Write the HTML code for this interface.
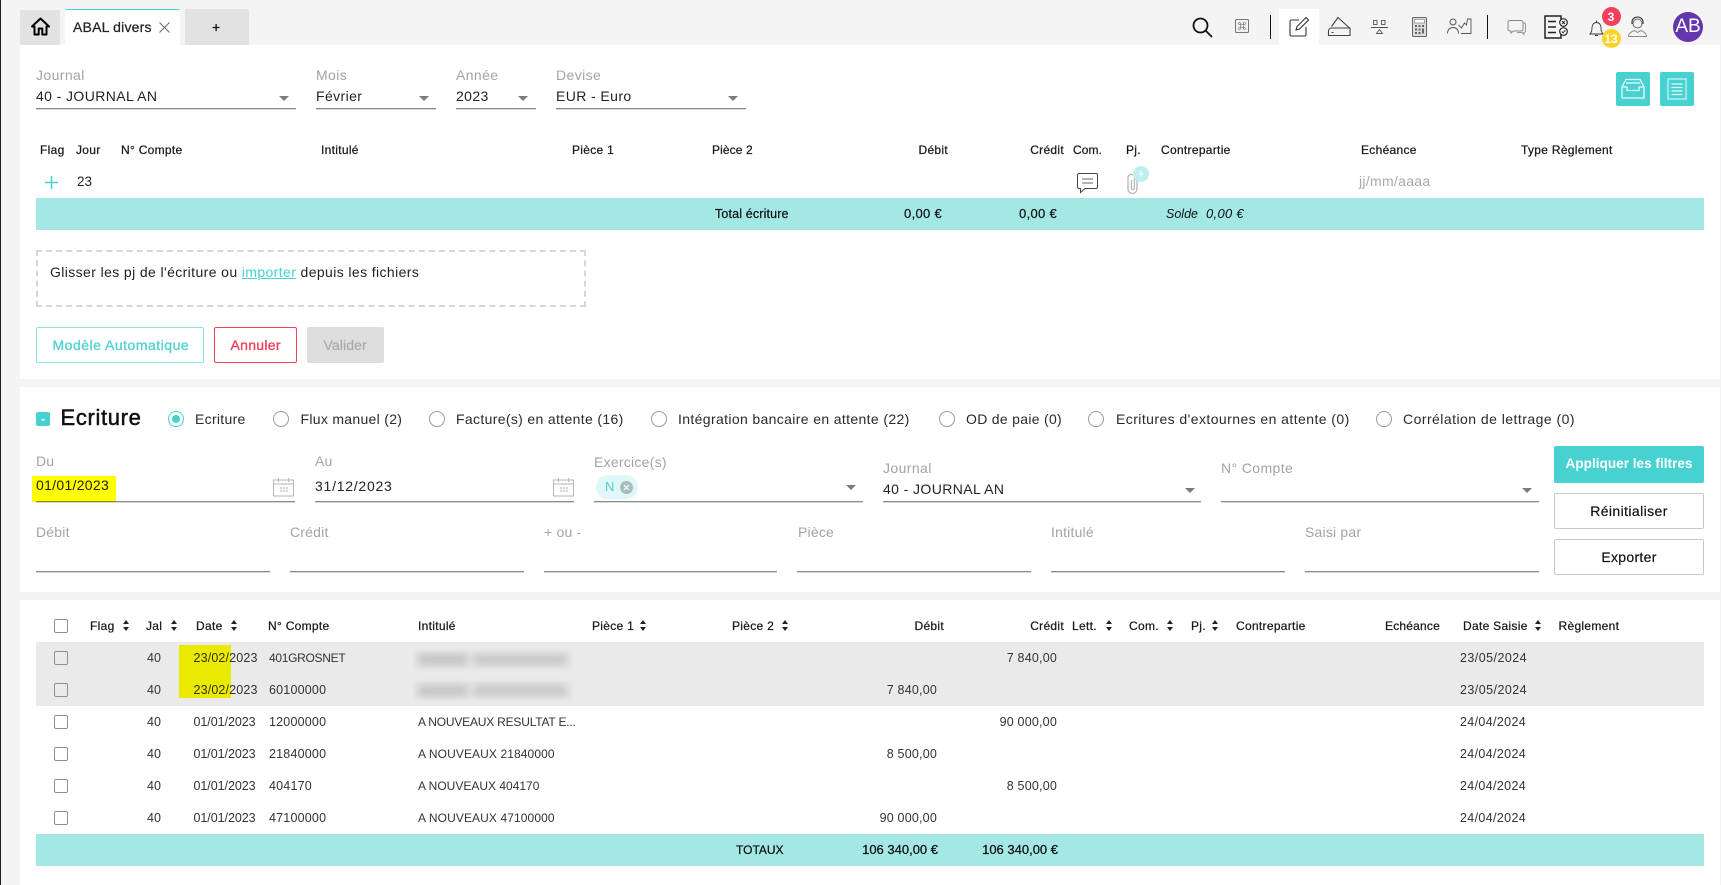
<!DOCTYPE html>
<html lang="fr"><head><meta charset="utf-8"><title>ABAL divers</title>
<style>
html,body{margin:0;padding:0;width:1721px;height:885px;overflow:hidden;background:#f4f4f4}
body{position:relative;font-family:"Liberation Sans",Arial,sans-serif;color:#222;border:0}
.b{position:absolute;display:block}
.t{position:absolute;white-space:nowrap;line-height:16px;display:block}
.f{font-size:14px;letter-spacing:.4px;color:#222}
.l{font-size:14px;letter-spacing:.4px;color:#a3a3a3}
.h{font-size:12px;letter-spacing:.3px;color:#1a1a1a;-webkit-text-stroke:.25px #1a1a1a}
.r{font-size:14px;letter-spacing:.3px;color:#2a2a2a}
.c{font-size:12.5px;color:#333}
.u{position:absolute;height:1px;background:#8c8c8c;border-bottom:1px solid #d8d8d8;box-sizing:content-box}
.a{position:absolute;width:0;height:0;border-left:5px solid transparent;border-right:5px solid transparent;border-top:5px solid #7b7b7b}
.s{position:absolute;width:6px;height:11px;top:620px}
.s:before,.s:after{content:"";position:absolute;left:0;width:0;height:0;border-left:3px solid transparent;border-right:3px solid transparent}
.s:before{top:0;border-bottom:4px solid #222}
.s:after{bottom:0;border-top:4px solid #222}
.cb{position:absolute;left:54px;width:12px;height:12px;border:1px solid #8f8f8f;border-radius:2px;background:transparent}
.rd{position:absolute;top:411px;width:14px;height:14px;border:1.5px solid #9a9a9a;border-radius:50%;background:#fff}
.btn{position:absolute;box-sizing:border-box;border-radius:2px;text-align:center}
.y{position:absolute;background:#ff0;mix-blend-mode:multiply}
svg{position:absolute;overflow:visible}
</style></head><body>
<span class="b" style="left:0;top:0;width:1px;height:885px;background:#222"></span>

<!-- Tabs -->
<span class="b" style="left:20px;top:10px;width:40px;height:35px;background:#e2e2e2;border-radius:2px 2px 0 0"></span>
<svg style="left:31px;top:17px" width="19" height="19" viewBox="0 0 19 19"><path d="M9.5 1.5 1 9.5h2.5V17.5h4.2v-6h3.6v6h4.2V9.5H18z" fill="none" stroke="#000" stroke-width="2" stroke-linejoin="round"/></svg>
<span class="b" style="left:65px;top:9px;width:115px;height:36px;background:#fff;border-top:1px solid #47d1d1;box-sizing:border-box;border-radius:2px 2px 0 0"></span>
<span class="t" style="left:73px;top:19px;font-size:14px;letter-spacing:.2px;color:#222;-webkit-text-stroke:.25px #222">ABAL divers</span>
<svg style="left:159px;top:22px" width="11" height="11" viewBox="0 0 11 11"><path d="M.5.5l10 10M10.500.5l-10 10" stroke="#666" stroke-width=".9" fill="none"/></svg>
<span class="b" style="left:185px;top:9px;width:64px;height:36px;background:#e2e2e2;border-radius:2px 2px 0 0"></span>
<span class="t" style="left:212px;top:19px;font-size:14px;color:#111;-webkit-text-stroke:.3px #111">+</span>

<!-- Toolbar icons -->
<svg style="left:1192px;top:17px" width="21" height="21" viewBox="0 0 21 21"><circle cx="8.500" cy="8.500" r="7" fill="none" stroke="#111" stroke-width="1.800"/><path d="M13.500 13.500 20 20" stroke="#111" stroke-width="1.800"/></svg>
<svg style="left:1235px;top:19px" width="14" height="14" viewBox="0 0 14 14"><rect x=".5" y=".5" width="13" height="13" rx="1" fill="#f0f0f0" stroke="#777"/><path d="M5.500 5.500h3v3h-3zM5.500 5.500H4.200a1 1 0 1 1 1.300-1.300zM8.500 5.500V4.200a1 1 0 1 1 1.300 1.300zM8.500 8.500h1.300a1 1 0 1 1-1.300 1.300zM5.500 8.500v1.300a1 1 0 1 1-1.300-1.300z" fill="none" stroke="#666" stroke-width=".6"/></svg>
<span class="b" style="left:1270px;top:15px;width:1px;height:24px;background:#111"></span>
<span class="b" style="left:1279px;top:9px;width:40px;height:36px;background:#fff"></span>
<svg style="left:1289px;top:16px" width="21" height="21" viewBox="0 0 21 21"><path d="M10 4H2.500a1.500 1.500 0 0 0-1.500 1.500v13A1.500 1.500 0 0 0 2.500 20h13a1.500 1.500 0 0 0 1.500-1.500V11" fill="none" stroke="#333" stroke-width="1.100"/><path d="M7 14l1-3.500L17 1.500l2.500 2.500-9 9z" fill="none" stroke="#333" stroke-width="1.100"/></svg>
<svg style="left:1328px;top:17px" width="23" height="20" viewBox="0 0 23 20"><path d="M.5 18.500V14a3 3 0 0 1 3-3H22v7.500zM3.500 9.500 10 .5 21.500 11" fill="none" stroke="#444" stroke-width="1.100"/><path d="M3.500 15.500h2" stroke="#444" stroke-width="1"/></svg>
<svg style="left:1371px;top:20px" width="17" height="14" viewBox="0 0 17 14"><path d="M0 7.500h17" stroke="#555"/><rect x="2.500" y=".5" width="3.500" height="4" fill="none" stroke="#555" stroke-width=".9"/><rect x="10.500" y=".5" width="3.500" height="4" fill="none" stroke="#555" stroke-width=".9"/><path d="M8.500 9.500l3 4h-6z" fill="none" stroke="#555" stroke-width=".9"/></svg>
<svg style="left:1412px;top:17px" width="15" height="20" viewBox="0 0 15 20"><rect x=".5" y=".5" width="14" height="19" rx="1" fill="#ddd" stroke="#666"/><rect x="2.500" y="2.500" width="10" height="3.500" fill="#fff" stroke="#777" stroke-width=".6"/><path d="M3 8h2v2H3zM6.500 8h2v2h-2zM10 8h2v2h-2zM3 11.500h2v2H3zM6.500 11.500h2v2h-2zM10 11.500h2v5h-2zM3 15h2v2H3zM6.500 15h2v2h-2z" fill="#666"/></svg>
<svg style="left:1447px;top:18px" width="25" height="16" viewBox="0 0 25 16"><circle cx="6" cy="4" r="3" fill="none" stroke="#555"/><path d="M.5 15.500c0-4 2.500-6 5.500-6s5.500 2 5.500 6" fill="none" stroke="#555"/><path d="M11.500 7l3 3 3-5 2 2 1-6h3.500v14.500H14" fill="none" stroke="#555" stroke-width=".9"/></svg>
<span class="b" style="left:1487px;top:15px;width:1px;height:24px;background:#111"></span>
<svg style="left:1507px;top:20px" width="19" height="15" viewBox="0 0 19 15"><path d="M3 .5h11a2 2 0 0 1 2 2V9a2 2 0 0 1-2 2H6.500L4 13v-2H3A2 2 0 0 1 1 9V2.500a2 2 0 0 1 2-2z" fill="none" stroke="#888"/><path d="M16.500 3h.5a1.500 1.500 0 0 1 1.500 1.500V11a1.500 1.500 0 0 1-1.500 1.500V14.500l-2-2H10" fill="none" stroke="#89a"/></svg>
<svg style="left:1544px;top:15px" width="25" height="24" viewBox="0 0 25 24"><path d="M17 4.500V1H1v22h16v-4" fill="none" stroke="#222" stroke-width="1.500"/><path d="M4 6.500h8M4 12h8M4 17.500h8" stroke="#222" stroke-width="1.400"/><circle cx="19.500" cy="7.500" r="3.800" fill="#fff" stroke="#222" stroke-width="1.200"/><circle cx="19.500" cy="16.500" r="3.800" fill="#fff" stroke="#222" stroke-width="1.200"/><path d="M18 6l3 3M21 6l-3 3M17.800 16.500l1.300 1.300 2.300-2.600" stroke="#222" fill="none"/></svg>
<svg style="left:1589px;top:20px" width="15" height="17" viewBox="0 0 15 17"><path d="M1 14c1.500-1.500 2-3 2-6s1.500-5.500 4.500-5.500S12 5 12 8s.5 4.500 2 6zM7.500 2.500V.5M6 15.500h3" fill="none" stroke="#333" stroke-width=".9"/></svg>
<span class="b" style="left:1601.500px;top:7px;width:19px;height:19px;background:#f2415f;border-radius:50%"></span>
<span class="t" style="left:1601px;top:8.500px;width:20px;text-align:center;color:#fff;font-size:12px;font-weight:bold">3</span>
<svg style="left:1628px;top:17px" width="19" height="20" viewBox="0 0 19 20"><circle cx="9.500" cy="6.500" r="4.500" fill="none" stroke="#666"/><path d="M4 7V5a5.500 5 0 0 1 11 0v2" fill="none" stroke="#333" stroke-width="1.100"/><path d="M.5 19.500c0-3.500 3-5 6-6l3 2 3-2c3 1 6 2.500 6 6z" fill="none" stroke="#888"/></svg>
<span class="b" style="left:1673px;top:12px;width:30px;height:30px;background:#6435ab;border-radius:50%"></span>
<span class="t" style="left:1673px;top:19px;width:30px;text-align:center;color:#fff;font-size:19px;letter-spacing:0">AB</span>

<!-- Panel 1 -->
<span class="b" style="left:20px;top:45px;width:1700px;height:334px;background:#fff"></span>
<span class="b" style="left:1601.500px;top:29px;width:19px;height:19px;background:#fbd42b;border-radius:50%"></span>
<span class="t" style="left:1601px;top:30.500px;width:20px;text-align:center;color:#fff;font-size:12px;font-weight:bold">13</span>
<span class="t l" style="left:36px;top:67px">Journal</span>
<span class="t f" style="left:36px;top:88px">40 - JOURNAL AN</span>
<span class="a" style="left:279px;top:96px"></span>
<span class="u" style="left:36px;top:108px;width:260px"></span>
<span class="t l" style="left:316px;top:67px">Mois</span>
<span class="t f" style="left:316px;top:88px">Février</span>
<span class="a" style="left:419px;top:96px"></span>
<span class="u" style="left:316px;top:108px;width:120px"></span>
<span class="t l" style="left:456px;top:67px">Année</span>
<span class="t f" style="left:456px;top:88px">2023</span>
<span class="a" style="left:518px;top:96px"></span>
<span class="u" style="left:456px;top:108px;width:80px"></span>
<span class="t l" style="left:556px;top:67px">Devise</span>
<span class="t f" style="left:556px;top:88px">EUR - Euro</span>
<span class="a" style="left:728px;top:96px"></span>
<span class="u" style="left:556px;top:108px;width:190px"></span>

<span class="b" style="left:1616px;top:72px;width:34px;height:34px;background:#47d1d1;border-radius:2px"></span>
<svg style="left:1621px;top:78px" width="24" height="22" viewBox="0 0 24 22"><path d="M1 9 5 1.500h14L23 9v11H1zM1 9h5v3.500h12V9h5M5 5h14" fill="none" stroke="#fff" stroke-width="1.300" stroke-opacity=".9"/></svg>
<span class="b" style="left:1660px;top:72px;width:34px;height:34px;background:#47d1d1;border-radius:2px"></span>
<svg style="left:1667px;top:78px" width="20" height="22" viewBox="0 0 20 22"><rect x="1" y="1" width="18" height="20" fill="none" stroke="#c5f1f1" stroke-width="1.300"/><path d="M4.500 6h11M4.500 9.500h11M4.500 13h11M4.500 16.500h11" stroke="#e6fafa" stroke-width="1.200"/></svg>

<span class="t h" style="left:40px;top:142px">Flag</span>
<span class="t h" style="left:76px;top:142px">Jour</span>
<span class="t h" style="left:121px;top:142px">N° Compte</span>
<span class="t h" style="left:321px;top:142px">Intitulé</span>
<span class="t h" style="left:572px;top:142px">Pièce 1</span>
<span class="t h" style="left:712px;top:142px;letter-spacing:.1px">Pièce 2</span>
<span class="t h" style="right:773px;top:142px">Débit</span>
<span class="t h" style="right:657px;top:142px">Crédit</span>
<span class="t h" style="left:1073px;top:142px;letter-spacing:.1px">Com.</span>
<span class="t h" style="left:1126px;top:142px">Pj.</span>
<span class="t h" style="left:1161px;top:142px">Contrepartie</span>
<span class="t h" style="left:1361px;top:142px">Echéance</span>
<span class="t h" style="left:1521px;top:142px">Type Règlement</span>

<svg style="left:44px;top:175px" width="15" height="15" viewBox="0 0 15 15"><path d="M7.500 1v13M1 7.500h13" stroke="#47d1d1" stroke-width="1.500"/></svg>
<span class="t" style="left:77px;top:174px;font-size:13.500px;color:#222">23</span>
<svg style="left:1077px;top:173px" width="21" height="20" viewBox="0 0 21 20"><path d="M2 .5h17A1.500 1.500 0 0 1 20.500 2v12a1.500 1.500 0 0 1-1.500 1.500H8L3.500 19.500v-4H2A1.500 1.500 0 0 1 .5 14V2A1.500 1.500 0 0 1 2 .5z" fill="#fff" stroke="#444"/><path d="M5 6h11M5 10h11" stroke="#666" stroke-width="1.100"/></svg>
<svg style="left:1127px;top:173px" width="11" height="21" viewBox="0 0 11 21"><path d="M10 6v10a4.500 4.500 0 0 1-9 0V4.500a3.200 3.200 0 0 1 6.400 0V15a1.500 1.500 0 0 1-3 0V7" fill="none" stroke="#b5b5b5" stroke-width="1.300"/></svg>
<span class="b" style="left:1133px;top:166px;width:16px;height:16px;border-radius:50%;background:#bdeef0"></span>
<span class="t" style="left:1133px;top:166px;width:16px;text-align:center;color:#fff;font-size:13px">+</span>
<span class="t" style="left:1359px;top:173px;font-size:14px;letter-spacing:.3px;color:#a8a8a8">jj/mm/aaaa</span>

<span class="b" style="left:36px;top:198px;width:1668px;height:32px;background:#a4e8e6"></span>
<span class="t" style="left:715px;top:206px;font-size:12.500px;letter-spacing:.15px;color:#111;-webkit-text-stroke:.2px #111">Total écriture</span>
<span class="t" style="right:779px;top:206px;font-size:13px;letter-spacing:.3px;color:#111;-webkit-text-stroke:.2px #111">0,00 €</span>
<span class="t" style="right:664px;top:206px;font-size:13px;letter-spacing:.3px;color:#111;-webkit-text-stroke:.2px #111">0,00 €</span>
<span class="t" style="left:1166px;top:206px;font-size:12.500px;font-style:italic;color:#111">Solde</span>
<span class="t" style="left:1206px;top:206px;font-size:13px;letter-spacing:.3px;font-style:italic;color:#111">0,00 €</span>

<span class="b" style="left:36px;top:250px;width:550px;height:57px;box-sizing:border-box;border:2px dashed #d6d6d6"></span>
<span class="t" style="left:50px;top:264px;font-size:14px;letter-spacing:.39px;color:#222">Glisser les pj de l'écriture ou <span style="color:#47d1d1;text-decoration:underline">importer</span> depuis les fichiers</span>

<span class="btn" style="left:36px;top:327px;width:168px;height:36px;border:1px solid #8fe3e3;background:#fff"></span>
<span class="t" style="left:52.500px;top:337px;font-size:14px;letter-spacing:.5px;color:#55d2d4;-webkit-text-stroke:.35px #55d2d4">Modèle Automatique</span>
<span class="btn" style="left:214px;top:327px;width:83px;height:36px;border:1px solid #f2415f;background:#fff"></span>
<span class="t" style="left:230.500px;top:337px;font-size:14px;letter-spacing:.3px;color:#f2415f;-webkit-text-stroke:.35px #f2415f">Annuler</span>
<span class="btn" style="left:307px;top:327px;width:77px;height:36px;background:#dedede"></span>
<span class="t" style="left:323.500px;top:337px;font-size:14px;letter-spacing:.1px;color:#a9a9a9;-webkit-text-stroke:.2px #a9a9a9">Valider</span>

<!-- Panel 2 -->
<span class="b" style="left:20px;top:387px;width:1700px;height:205px;background:#fff"></span>
<span class="b" style="left:36px;top:412px;width:14px;height:14px;background:#47d1d1;border-radius:2px"></span>
<span class="t" style="left:36px;top:411px;width:14px;text-align:center;color:#fff;font-size:12px;font-weight:bold">-</span>
<span class="t" style="left:60.500px;top:406px;font-size:22px;line-height:24px;letter-spacing:.65px;color:#111;-webkit-text-stroke:.5px #111">Ecriture</span>
<span class="rd" style="left:167.500px;border-color:#47d1d1"></span>
<span class="b" style="left:172px;top:415px;width:8px;height:8px;border-radius:50%;background:#47d1d1"></span>
<span class="t r" style="left:195px;top:411px">Ecriture</span>
<span class="rd" style="left:272.500px"></span>
<span class="t r" style="left:300.500px;top:411px">Flux manuel (2)</span>
<span class="rd" style="left:428.500px"></span>
<span class="t r" style="left:456px;top:411px;letter-spacing:.34px">Facture(s) en attente (16)</span>
<span class="rd" style="left:650.500px"></span>
<span class="t r" style="left:678px;top:411px;letter-spacing:.36px">Intégration bancaire en attente (22)</span>
<span class="rd" style="left:938.500px"></span>
<span class="t r" style="left:966px;top:411px">OD de paie (0)</span>
<span class="rd" style="left:1087.500px"></span>
<span class="t r" style="left:1116px;top:411px;letter-spacing:.43px">Ecritures d'extournes en attente (0)</span>
<span class="rd" style="left:1375.500px"></span>
<span class="t r" style="left:1403px;top:411px;letter-spacing:.46px">Corrélation de lettrage (0)</span>

<span class="t l" style="left:36px;top:453px;letter-spacing:.1px">Du</span>
<span class="t f" style="left:36px;top:477px;letter-spacing:.3px">01/01/2023</span>
<span class="u" style="left:36px;top:500.500px;width:259px"></span>
<svg style="left:273px;top:477px" width="21" height="20" viewBox="0 0 21 20"><path d="M.5 3h20v16H.5zM.5 7h20M5.500 1v4M15.500 1v4" fill="none" stroke="#b5b5b5"/><path d="M7 11h2M10 11h2M13 11h2M7 14h2M10 14h2M13 14h2" stroke="#aaa"/></svg>
<span class="t l" style="left:315px;top:453px;letter-spacing:.1px">Au</span>
<span class="t f" style="left:315px;top:478px;letter-spacing:.75px">31/12/2023</span>
<span class="u" style="left:315px;top:500.500px;width:259px"></span>
<svg style="left:553px;top:477px" width="21" height="20" viewBox="0 0 21 20"><path d="M.5 3h20v16H.5zM.5 7h20M5.500 1v4M15.500 1v4" fill="none" stroke="#b5b5b5"/><path d="M7 11h2M10 11h2M13 11h2M7 14h2M10 14h2M13 14h2" stroke="#aaa"/></svg>
<span class="t l" style="left:594px;top:454px;letter-spacing:.25px">Exercice(s)</span>
<span class="b" style="left:596px;top:475px;width:42px;height:24px;border-radius:12px;background:#dff7f8"></span>
<span class="t" style="left:605px;top:479px;font-size:13px;color:#47d1d1">N</span>
<span class="b" style="left:620px;top:481px;width:13px;height:13px;border-radius:50%;background:#a9bcbc"></span>
<svg style="left:620px;top:481px" width="13" height="13" viewBox="0 0 13 13"><path d="M4 4l5 5M9 4l-5 5" stroke="#fff" stroke-width="1.200"/></svg>
<span class="a" style="left:846px;top:485px"></span>
<span class="u" style="left:594px;top:501px;width:269px"></span>
<span class="t l" style="left:883px;top:460px">Journal</span>
<span class="t f" style="left:883px;top:481px">40 - JOURNAL AN</span>
<span class="a" style="left:1185px;top:488px"></span>
<span class="u" style="left:883px;top:501px;width:318px"></span>
<span class="t l" style="left:1221px;top:460px">N° Compte</span>
<span class="a" style="left:1522px;top:488px"></span>
<span class="u" style="left:1221px;top:501px;width:318px"></span>

<span class="t l" style="left:36px;top:524px;letter-spacing:.2px">Débit</span>
<span class="u" style="left:36px;top:571px;width:234px"></span>
<span class="t l" style="left:290px;top:524px;letter-spacing:.2px">Crédit</span>
<span class="u" style="left:290px;top:571px;width:234px"></span>
<span class="t l" style="left:544px;top:524px;letter-spacing:.2px">+ ou -</span>
<span class="u" style="left:544px;top:571px;width:233px"></span>
<span class="t l" style="left:798px;top:524px;letter-spacing:.2px">Pièce</span>
<span class="u" style="left:797px;top:571px;width:234px"></span>
<span class="t l" style="left:1051px;top:524px;letter-spacing:.2px">Intitulé</span>
<span class="u" style="left:1051px;top:571px;width:234px"></span>
<span class="t l" style="left:1305px;top:524px;letter-spacing:.2px">Saisi par</span>
<span class="u" style="left:1305px;top:571px;width:234px"></span>

<span class="btn" style="left:1554px;top:446px;width:150px;height:37px;background:#47d1d1"></span>
<span class="t" style="left:1554px;top:456px;width:150px;text-align:center;font-size:13.600px;font-weight:bold;color:#fff">Appliquer les filtres</span>
<span class="btn" style="left:1554px;top:493px;width:150px;height:36px;border:1px solid #c9c9c9"></span>
<span class="t" style="left:1554px;top:503px;width:150px;text-align:center;font-size:14px;letter-spacing:.4px;color:#111;-webkit-text-stroke:.2px #111">Réinitialiser</span>
<span class="btn" style="left:1554px;top:539px;width:150px;height:36px;border:1px solid #c9c9c9"></span>
<span class="t" style="left:1554px;top:549px;width:150px;text-align:center;font-size:14px;letter-spacing:.3px;color:#111;-webkit-text-stroke:.2px #111">Exporter</span>

<!-- Panel 3 -->
<span class="b" style="left:20px;top:600px;width:1700px;height:285px;background:#fff"></span>
<span class="cb" style="top:619px"></span>
<span class="t h" style="left:90px;top:618px">Flag</span><i class="s" style="left:123px"></i>
<span class="t h" style="left:146px;top:618px">Jal</span><i class="s" style="left:171px"></i>
<span class="t h" style="left:196px;top:618px">Date</span><i class="s" style="left:231px"></i>
<span class="t h" style="left:268px;top:618px">N° Compte</span>
<span class="t h" style="left:418px;top:618px">Intitulé</span>
<span class="t h" style="left:592px;top:618px">Pièce 1</span><i class="s" style="left:640px"></i>
<span class="t h" style="left:732px;top:618px">Pièce 2</span><i class="s" style="left:782px"></i>
<span class="t h" style="right:777px;top:618px">Débit</span>
<span class="t h" style="right:657px;top:618px">Crédit</span>
<span class="t h" style="left:1072px;top:618px">Lett.</span><i class="s" style="left:1106px"></i>
<span class="t h" style="left:1129px;top:618px">Com.</span><i class="s" style="left:1167px"></i>
<span class="t h" style="left:1191px;top:618px">Pj.</span><i class="s" style="left:1212px"></i>
<span class="t h" style="left:1236px;top:618px">Contrepartie</span>
<span class="t h" style="left:1385px;top:618px;letter-spacing:.2px">Echéance</span>
<span class="t h" style="left:1463px;top:618px">Date Saisie</span><i class="s" style="left:1535px"></i>
<span class="t h" style="left:1558.500px;top:618px">Règlement</span>

<span class="b" style="left:36px;top:642px;width:1668px;height:64px;background:#eaeaea"></span>
<span class="b" style="left:414px;top:652px;width:158px;height:16px;background:#e3e3e3;filter:blur(1px)"></span>
<span class="b" style="left:414px;top:682px;width:158px;height:17px;background:#e3e3e3;filter:blur(1px)"></span>
<span class="b" style="left:419px;top:654px;width:48px;height:11px;background:#c6c6c6;filter:blur(3.5px)"></span>
<span class="b" style="left:474px;top:654px;width:92px;height:11px;background:#cacaca;filter:blur(3.5px)"></span>
<span class="b" style="left:419px;top:685px;width:48px;height:11px;background:#c6c6c6;filter:blur(3.5px)"></span>
<span class="b" style="left:474px;top:685px;width:92px;height:11px;background:#cacaca;filter:blur(3.5px)"></span>

<span class="cb" style="top:651px"></span>
<span class="t c" style="left:147px;top:650px">40</span>
<span class="t c" style="left:193.500px;top:650px;letter-spacing:.15px">23/02/2023</span>
<span class="t c" style="left:269px;top:650px;font-size:12px;letter-spacing:-.3px">401GROSNET</span>
<span class="t c" style="right:664px;top:650px;letter-spacing:.2px">7 840,00</span>
<span class="t c" style="left:1460px;top:650px;letter-spacing:.45px">23/05/2024</span>

<span class="cb" style="top:683px"></span>
<span class="t c" style="left:147px;top:682px">40</span>
<span class="t c" style="left:193.500px;top:682px;letter-spacing:.15px">23/02/2023</span>
<span class="t c" style="left:269px;top:682px;letter-spacing:.2px">60100000</span>
<span class="t c" style="right:784px;top:682px;letter-spacing:.2px">7 840,00</span>
<span class="t c" style="left:1460px;top:682px;letter-spacing:.45px">23/05/2024</span>

<span class="y" style="left:179px;top:645px;width:52px;height:53px"></span>

<span class="cb" style="top:715px"></span>
<span class="t c" style="left:147px;top:714px">40</span>
<span class="t c" style="left:193.500px;top:714px;letter-spacing:-.05px">01/01/2023</span>
<span class="t c" style="left:269px;top:714px;letter-spacing:.2px">12000000</span>
<span class="t c" style="left:418px;top:714px;font-size:12px;letter-spacing:-.2px">A NOUVEAUX RESULTAT E...</span>
<span class="t c" style="right:664px;top:714px;letter-spacing:.2px">90 000,00</span>
<span class="t c" style="left:1460px;top:714px;letter-spacing:.35px">24/04/2024</span>

<span class="cb" style="top:747px"></span>
<span class="t c" style="left:147px;top:746px">40</span>
<span class="t c" style="left:193.500px;top:746px;letter-spacing:-.05px">01/01/2023</span>
<span class="t c" style="left:269px;top:746px;letter-spacing:.2px">21840000</span>
<span class="t c" style="left:418px;top:746px;font-size:12px;letter-spacing:.1px">A NOUVEAUX 21840000</span>
<span class="t c" style="right:784px;top:746px;letter-spacing:.2px">8 500,00</span>
<span class="t c" style="left:1460px;top:746px;letter-spacing:.35px">24/04/2024</span>

<span class="cb" style="top:779px"></span>
<span class="t c" style="left:147px;top:778px">40</span>
<span class="t c" style="left:193.500px;top:778px;letter-spacing:-.05px">01/01/2023</span>
<span class="t c" style="left:269px;top:778px;letter-spacing:.2px">404170</span>
<span class="t c" style="left:418px;top:778px;font-size:12px">A NOUVEAUX 404170</span>
<span class="t c" style="right:664px;top:778px;letter-spacing:.2px">8 500,00</span>
<span class="t c" style="left:1460px;top:778px;letter-spacing:.35px">24/04/2024</span>

<span class="cb" style="top:811px"></span>
<span class="t c" style="left:147px;top:810px">40</span>
<span class="t c" style="left:193.500px;top:810px;letter-spacing:-.05px">01/01/2023</span>
<span class="t c" style="left:269px;top:810px;letter-spacing:.2px">47100000</span>
<span class="t c" style="left:418px;top:810px;font-size:12px;letter-spacing:.1px">A NOUVEAUX 47100000</span>
<span class="t c" style="right:784px;top:810px;letter-spacing:.2px">90 000,00</span>
<span class="t c" style="left:1460px;top:810px;letter-spacing:.35px">24/04/2024</span>

<span class="b" style="left:36px;top:834px;width:1668px;height:32px;background:#a4e8e6"></span>
<span class="t" style="left:736px;top:842px;font-size:12px;color:#111;-webkit-text-stroke:.25px #111">TOTAUX</span>
<span class="t" style="right:783px;top:842px;font-size:13px;color:#111;-webkit-text-stroke:.25px #111">106 340,00 €</span>
<span class="t" style="right:663px;top:842px;font-size:13px;color:#111;-webkit-text-stroke:.25px #111">106 340,00 €</span>

<span class="y" style="left:32px;top:476px;width:84px;height:26px"></span>
</body></html>
